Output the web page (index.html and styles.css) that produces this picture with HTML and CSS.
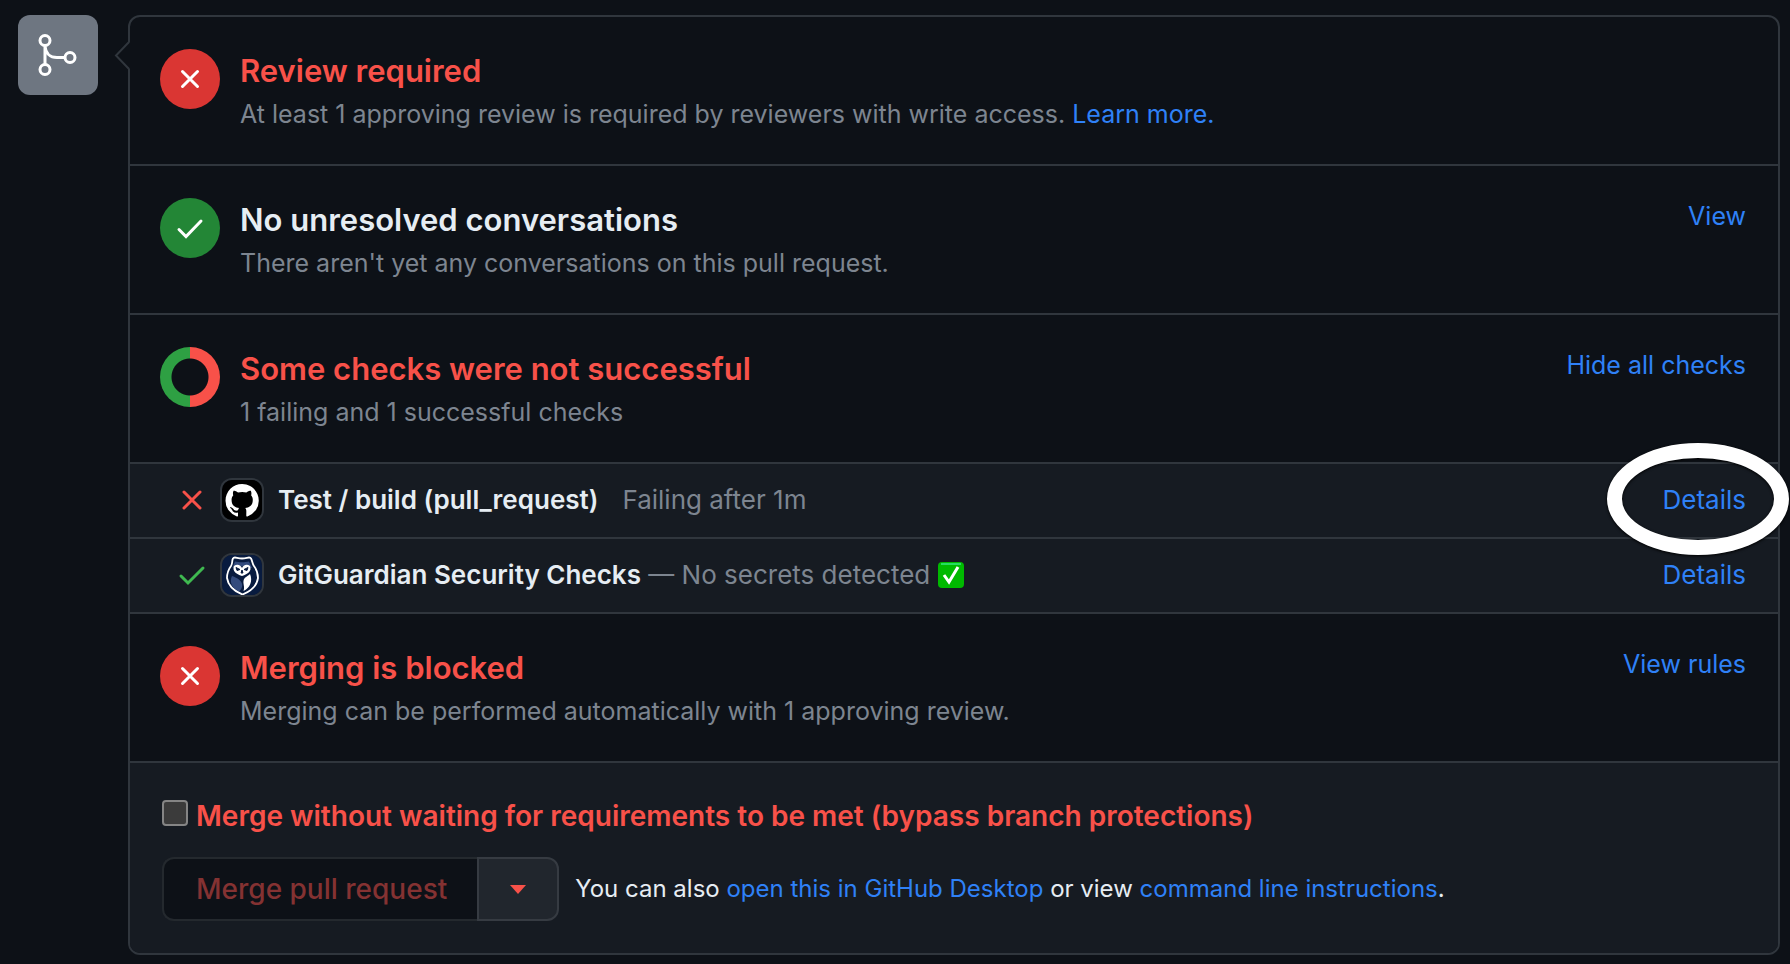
FILE: index.html
```html
<!DOCTYPE html>
<html lang="en">
<head>
<meta charset="utf-8">
<title>Merge status</title>
<link rel="stylesheet" href="styles.css">
</head>
<body>
<main class="timeline">
  <div class="badge">
    <svg class="badge-icon" viewBox="0 0 40 44" aria-hidden="true">
      <circle cx="7" cy="7.500" r="5"/><circle cx="7" cy="36.500" r="5"/><circle cx="32" cy="24.500" r="5"/>
      <path d="M7 12.500V31.500M7 13C7.500 20 12 24.500 19 24.500H27"/>
    </svg>
  </div>
  <div class="box">
    <svg class="notch" viewBox="0 0 16 32" aria-hidden="true"><path class="notch-fill" d="M16 2L2 15.500L16 29Z"/><path d="M15 2L2 15.500L15 29"/></svg>

    <section class="item">
      <span class="status status-fail"><svg viewBox="0 0 60 60" aria-hidden="true"><path d="M22.500 22.500L37.500 37.500M37.500 22.500L22.500 37.500"/></svg></span>
      <div class="item-text">
        <h2 class="title title-fail">Review required</h2>
        <p class="note">At least 1 approving review is required by reviewers with write access. <a href="#learn">Learn more.</a></p>
      </div>
    </section>

    <section class="item">
      <span class="status status-ok"><svg viewBox="0 0 60 60" aria-hidden="true"><path d="M19 31.500L26 38.500L41 23"/></svg></span>
      <div class="item-text">
        <h2 class="title">No unresolved conversations</h2>
        <p class="note">There aren't yet any conversations on this pull request.</p>
      </div>
      <a class="action" href="#view">View</a>
    </section>

    <section class="item">
      <span class="status status-mixed"></span>
      <div class="item-text">
        <h2 class="title title-fail">Some checks were not successful</h2>
        <p class="note">1 failing and 1 successful checks</p>
      </div>
      <a class="action" href="#hide">Hide all checks</a>
    </section>

    <ul class="checks">
      <li class="check">
        <svg class="mark mark-fail" viewBox="0 0 28 28" aria-hidden="true"><path d="M6 6L22 22M22 6L6 22"/></svg>
        <svg class="app" viewBox="0 0 40 40" aria-hidden="true">
          <rect width="40" height="40" fill="#000"/>
          <path transform="translate(3.500 4) scale(2.080)" fill="#fff" d="M8 0c4.420 0 8 3.580 8 8a8.013 8.013 0 0 1-5.450 7.590c-.4.080-.55-.17-.55-.38 0-.27.010-1.130.010-2.200 0-.75-.25-1.230-.54-1.480 1.780-.2 3.650-.88 3.650-3.950 0-.88-.31-1.590-.82-2.150.080-.2.360-1.020-.080-2.120 0 0-.67-.22-2.200.82-.64-.18-1.320-.27-2-.27-.68 0-1.360.090-2 .27-1.530-1.030-2.200-.82-2.200-.82-.44 1.100-.16 1.920-.080 2.120-.51.560-.82 1.280-.82 2.150 0 3.060 1.860 3.750 3.640 3.950-.23.200-.44.550-.51 1.070-.46.210-1.610.550-2.330-.66-.15-.24-.6-.83-1.230-.82-.67.010-.27.380.010.530.34.190.73.900.82 1.130.16.450.68 1.310 2.690.94 0 .67.010 1.300.010 1.490 0 .21-.15.450-.55.380A7.995 7.995 0 0 1 0 8c0-4.420 3.580-8 8-8Z"/>
        </svg>
        <p class="check-text"><strong>Test / build (pull_request)</strong><span class="check-note">Failing after 1m</span></p>
        <span class="circled"><a href="#details-build">Details</a></span>
      </li>
      <li class="check">
        <svg class="mark mark-ok" viewBox="0 0 28 28" aria-hidden="true"><path d="M3 15L10 22L25 7"/></svg>
        <svg class="app" viewBox="0 0 40 40" aria-hidden="true">
          <rect width="40" height="40" fill="#081b3f"/>
          <path d="M11 3.500C12 1 15 3.500 20 3.500S28 1 29 3.500C30.500 6 30 8 32 11C35 15 36 18 36 23C35 30 29 36 20.500 39.500C12 36 6 30 5 23C5 18 6 15 9 11C11 8 9.500 6 11 3.500Z" fill="#081b3f" stroke="#fff" stroke-width="1.800"/>
          <path d="M13 6.500C17 7.500 23 7.500 27 6.500C28 9 29.500 11 30 13L20 11L10.500 13C11 11 12 9 13 6.500Z" fill="#334b7d"/>
          <path d="M10 21C7 27 10 33 17 36.500C22 32 22 25 10 21Z" fill="#334b7d"/>
          <path d="M12 11C15 8.500 19 10 20 13C21 10 25 8.500 28 11C30 16 26 19 20 21C14 19 10 16 12 11Z" fill="#fff"/>
          <path d="M14 12.500L18 14.500L15 15.500ZM26 12.500L22 14.500L25 15.500ZM20 15L21 18H19Z" fill="#081b3f" stroke="#081b3f"/>
          <path d="M28 19C31 26 28 33 21.500 36C23 32 21 29 21.500 26C22 22 25 22 28 19Z" fill="#fff"/>
        </svg>
        <p class="check-text"><strong>GitGuardian Security Checks</strong> — No secrets detected <svg class="tick" viewBox="0 0 26 26" role="img" aria-label="passed"><rect width="26" height="26" rx="4" fill="#00b900"/><path d="M3 2H23" stroke="#25dc60" stroke-width="2"/><path d="M6 13L11 20L20 5" fill="none" stroke="#fff" stroke-width="3"/></svg></p>
        <a href="#details-guardian">Details</a>
      </li>
    </ul>

    <section class="item">
      <span class="status status-fail"><svg viewBox="0 0 60 60" aria-hidden="true"><path d="M22.500 22.500L37.500 37.500M37.500 22.500L22.500 37.500"/></svg></span>
      <div class="item-text">
        <h2 class="title title-fail">Merging is blocked</h2>
        <p class="note">Merging can be performed automatically with 1 approving review.</p>
      </div>
      <a class="action" href="#rules">View rules</a>
    </section>

    <form class="merge">
      <div class="bypass">
        <input class="bypass-box" type="checkbox" id="bypass">
        <label for="bypass">Merge without waiting for requirements to be met (bypass branch protections)</label>
      </div>
      <div class="merge-row">
        <div class="buttons">
          <button class="merge-button" type="button" disabled>Merge pull request</button>
          <button class="menu-button" type="button" aria-label="Select merge method"><svg viewBox="0 0 16 9" aria-hidden="true"><path d="M0 0H16L8 9Z"/></svg></button>
        </div>
        <p class="hint">You can also <a href="#desktop">open this in GitHub Desktop</a> or view <a href="#cli">command line instructions</a>.</p>
      </div>
    </form>
  </div>
</main>
</body>
</html>
```
FILE: styles.css
```css
*, *::after { box-sizing: border-box; }

body {
  margin: 0;
  background: #0d1117;
  color: #e6edf3;
  font: 25px/40px Inter, "Liberation Sans", sans-serif;
}

a { color: #2f81f7; text-decoration: none; }
p, h2, ul { margin: 0; padding: 0; }

.timeline {
  display: grid;
  grid-template-columns: 80px 1fr;
  gap: 30px;
  align-items: start;
  padding: 15px 10px 8px 18px;
}

.badge {
  display: grid;
  place-items: center;
  height: 80px;
  border-radius: 12px;
  background: #6e7681;
}
.badge-icon {
  width: 40px;
  height: 44px;
  fill: none;
  stroke: #fff;
  stroke-width: 3;
}

.box {
  position: relative;
  border: 2px solid #30363d;
  border-radius: 12px;
}
.notch {
  position: absolute;
  top: 23px;
  left: -16px;
  width: 16px;
  height: 32px;
  fill: none;
  stroke: #30363d;
  stroke-width: 2;
}
.notch-fill { fill: #0d1117; stroke: none; }

.item {
  display: flex;
  gap: 20px;
  padding: 30px 32px 31px 30px;
  border-bottom: 2px solid #30363d;
}
.item-text { flex: 1; }
.title { font-size: 31px; font-weight: 600; line-height: 48px; }
.title-fail { color: #f85149; }
.note { line-height: 38px; color: #7d8590; }

.status {
  width: 60px;
  height: 60px;
  margin-top: 2px;
  border-radius: 50%;
}
.status svg {
  display: block;
  fill: none;
  stroke: #fff;
  stroke-width: 3;
  stroke-linecap: round;
}
.status-fail { background: #da3633; }
.status-ok { background: #238636; }
.status-mixed {
  background: radial-gradient(circle, #0d1117 18px, transparent 19px), linear-gradient(90deg, #2ea043 50%, #f85149 50%);
}

.checks { list-style: none; background: #161b22; }
.check {
  display: flex;
  align-items: center;
  padding: 16px 32px 17px 48px;
  border-bottom: 2px solid #30363d;
  font-size: 26px;
}
.mark {
  width: 28px;
  height: 28px;
  margin-right: 16px;
  fill: none;
  stroke-width: 3;
  stroke-linecap: round;
}
.mark-fail { stroke: #f85149; }
.mark-ok { stroke: #3fb950; }
.app {
  width: 40px;
  height: 40px;
  margin-right: 16px;
  border-radius: 10px;
  box-shadow: 0 0 0 2px #30363d;
}
.check-text { flex: 1; line-height: 38px; color: #7d8590; }
.check-text strong { color: #e6edf3; font-weight: 600; }
.check-note { margin-left: 24px; }
.check a { display: block; line-height: 38px; }
.tick { width: 26px; height: 26px; vertical-align: -4px; }

.circled { position: relative; }
.circled::after {
  content: "";
  position: absolute;
  top: -38px;
  right: -43px;
  width: 182px;
  height: 112px;
  border: 15px solid #fff;
  border-radius: 50%;
  box-shadow: 0 1px 3px #000, inset 0 1px 3px #000;
  pointer-events: none;
}

.merge {
  padding: 32px;
  border-radius: 0 0 10px 10px;
  background: #161b22;
}
.bypass {
  display: flex;
  align-items: center;
  gap: 8px;
  margin-bottom: 20px;
  color: #f85149;
  font-size: 28px;
  font-weight: 600;
  line-height: 42px;
}
.bypass-box {
  appearance: none;
  width: 26px;
  height: 26px;
  margin: 0 0 6px;
  border: 2px solid #858585;
  border-radius: 4px;
  background: #3b3b3b;
}
.merge-row { display: flex; align-items: center; gap: 16px; }
.buttons { display: flex; height: 64px; }
.merge-button {
  padding: 0 30px 0 32px;
  border: 2px solid #24292e;
  border-right: 0;
  border-radius: 12px 0 0 12px;
  background: #0d1117;
  color: #843232;
  font: 500 28px/40px Inter, "Liberation Sans", sans-serif;
}
.menu-button {
  width: 82px;
  padding: 0;
  border: 2px solid #363b42;
  border-radius: 0 12px 12px 0;
  background: #21262d;
}
.menu-button svg { width: 16px; height: 9px; fill: #f85149; }
.hint { font-size: 24px; }
```
